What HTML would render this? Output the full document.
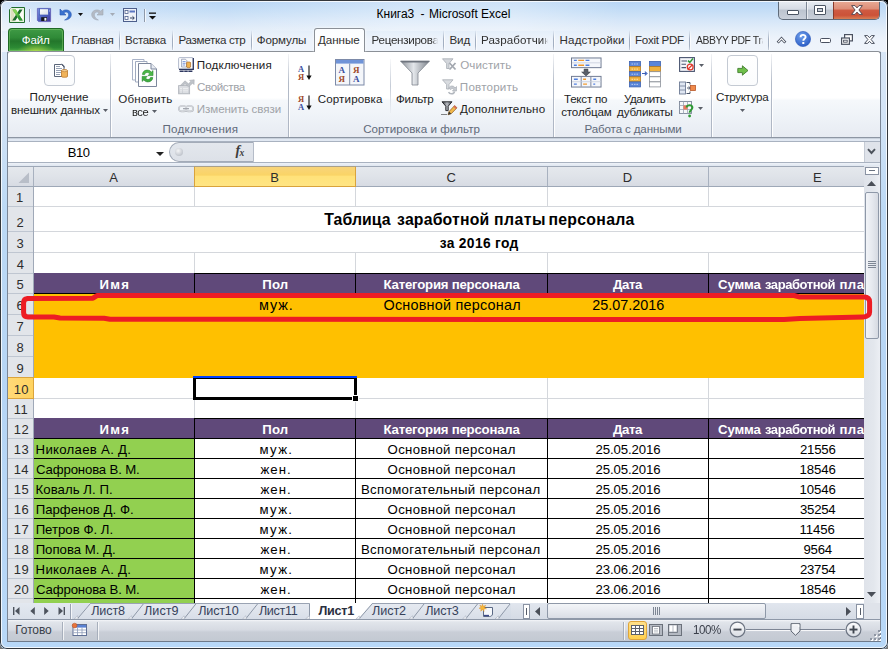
<!DOCTYPE html>
<html><head><meta charset="utf-8"><title>Excel</title>
<style>
*{box-sizing:border-box;margin:0;padding:0}
html,body{width:888px;height:649px;overflow:hidden;background:linear-gradient(#000 0,#000 50%,#757575 50%,#757575 100%)}
body{font-family:"Liberation Sans",sans-serif;font-size:12px;color:#1e1e1e;position:relative}
.a{position:absolute}
.t{position:absolute;white-space:nowrap}
#win{position:absolute;left:0;top:0;width:888px;height:649px;border-radius:7px 7px 6px 6px;overflow:hidden;
 background:linear-gradient(180deg,#dbe8f7 0px,#d4e4f6 110px,#bcd9f5 210px,#b6d5f5 400px,#b8d8f8 649px)}
svg{position:absolute;overflow:visible}

</style></head><body>
<div id="win">
<div class="a" style="left:1px;top:1px;width:886px;height:51px;background:linear-gradient(180deg,#b7d5f5 0px,#c2dcf6 8px,#d3e5f8 18px,#e2edf9 28px,#edf3fb 38px,#eff4fb 51px);"></div>
<div class="a" style="left:1px;top:1px;width:886px;height:30px;background:linear-gradient(90deg,rgba(255,255,255,.35) 0%,rgba(255,255,255,.15) 12%,rgba(255,255,255,0) 25%,rgba(255,255,255,.3) 45%,rgba(255,255,255,.3) 58%,rgba(255,255,255,0) 70%,rgba(255,255,255,0) 100%);"></div>
<div class="t" style="left:376.62px;top:6.00px;font-size:12px;line-height:16px;letter-spacing:-0.027px;color:#000;">Книга3</div>
<div class="t" style="left:420.47px;top:6.00px;font-size:12px;line-height:16px;letter-spacing:0.000px;color:#000;">-</div>
<div class="t" style="left:429.02px;top:6.00px;font-size:12px;line-height:16px;letter-spacing:0.003px;color:#000;">Microsoft Excel</div>
<svg style="left:9px;top:7px" width="16" height="16" viewBox="0 0 16 16">
<path d="M2.6 0.5 H15.5 V15.5 H0.5 V2.6 Z" fill="#fbfcf7" stroke="#1f6e2c"/>
<path d="M1.2 3 L3 1.2 H5.5 V14.8 H1.2 Z" fill="#dddfc0"/>
<path d="M1.5 1.5 H14.5 V14.5 H1.5 Z" fill="none" stroke="#e4efd8" stroke-width=".8"/>
<path d="M10.4 2.6 H13.6 L6.4 13.4 H3.2 Z" fill="#1c6a2c"/>
<path d="M3.4 2.6 H6.8 L13.8 13.4 H10.4 Z" fill="#4fb33e"/>
<path d="M3.4 2.6 H6.8 L8.6 5.4 L6.9 8 Z" fill="#86d257"/>
<path d="M8.6 10.6 L10.4 13.4 H13.8 L10.2 7.9 Z" fill="#2f9436"/>
</svg>
<div class="a" style="left:29px;top:9px;width:1px;height:13px;background:#8e9aab"></div>
<div class="a" style="left:30px;top:9px;width:1px;height:13px;background:rgba(255,255,255,.7)"></div>
<svg style="left:37px;top:8px" width="14" height="14" viewBox="0 0 14 14">
<defs><linearGradient id="sv" x1="0" y1="0" x2="1" y2="1"><stop offset="0" stop-color="#7b95e0"/><stop offset=".5" stop-color="#4f62c0"/><stop offset="1" stop-color="#46389c"/></linearGradient>
<linearGradient id="sl" x1="0" y1="0" x2="1" y2="1"><stop offset="0" stop-color="#ffffff"/><stop offset="1" stop-color="#d9dde6"/></linearGradient></defs>
<path d="M0.4 0.4 H13.6 V13.6 H1.6 L0.4 12.4 Z" fill="url(#sv)" stroke="#5a55b0" stroke-width=".7"/>
<rect x="2.6" y="0.8" width="8.8" height="6.2" fill="url(#sl)" stroke="#3f56b8" stroke-width=".7"/>
<rect x="4.2" y="9.2" width="5.8" height="3.8" fill="#15161c"/>
<rect x="7.4" y="9.9" width="2" height="2.8" fill="#f2f3f6"/>
<rect x="12" y="1.6" width="0.9" height="2.2" fill="#8fa0e0"/>
</svg>
<svg style="left:59px;top:8px" width="13" height="13" viewBox="0 0 13 13">
<path d="M1 1 L1 7 L7 7 L4.8 4.9 C7 3.2 10 4.2 9.6 7.4 C9.3 9.6 7.6 11 5.6 12 C9.5 12 12.3 9.8 12.3 6.6 C12.3 2 6.5 0.6 3.2 3.2 Z" fill="#3a72d0" stroke="#2856b0" stroke-width=".6"/>
</svg>
<svg style="left:78px;top:13px" width="5" height="3" viewBox="0 0 5 3"><path d="M0 0H5L2.5 3Z" fill="#111"/></svg>
<svg style="left:91px;top:8px" width="13" height="13" viewBox="0 0 13 13">
<path transform="translate(13,0) scale(-1,1)" d="M1 1 L1 7 L7 7 L4.8 4.9 C7 3.2 10 4.2 9.6 7.4 C9.3 9.6 7.6 11 5.6 12 C9.5 12 12.3 9.8 12.3 6.6 C12.3 2 6.5 0.6 3.2 3.2 Z" fill="#b4bac4" stroke="#a0a7b3" stroke-width=".6"/>
</svg>
<svg style="left:110px;top:13px" width="5" height="3" viewBox="0 0 5 3"><path d="M0 0H5L2.5 3Z" fill="#a4abb6"/></svg>
<svg style="left:123px;top:8px" width="14" height="14" viewBox="0 0 14 14">
<rect x="0.5" y="0.5" width="13" height="13" fill="#eef2f8" stroke="#4d5f8c"/>
<rect x="2" y="2.5" width="3" height="3" fill="#fff" stroke="#4d5f8c" stroke-width=".8"/>
<rect x="2" y="8.5" width="3" height="3" fill="#fff" stroke="#4d5f8c" stroke-width=".8"/>
<rect x="6.5" y="2.5" width="5.5" height="2" fill="#5c77c2"/>
<path d="M7 10 H11 M9.5 8.3 L11.3 10 L9.5 11.7" stroke="#33415f" stroke-width="1" fill="none"/>
</svg>
<div class="a" style="left:144px;top:9px;width:1px;height:13px;background:#8e9aab"></div>
<div class="a" style="left:145px;top:9px;width:1px;height:13px;background:rgba(255,255,255,.7)"></div>
<svg style="left:149px;top:12px" width="7" height="8" viewBox="0 0 7 8"><rect x="0" y="0.5" width="7" height="1.3" fill="#111"/><path d="M0 4H7L3.5 7.6Z" fill="#111"/></svg>
<div class="a" style="left:778px;top:1px;width:102px;height:19px;border:1px solid #5f6b7a;border-top:none;border-radius:0 0 5px 5px;background:linear-gradient(180deg,#e8edf3 0%,#d5dbe4 45%,#bcc4cf 50%,#c9d0da 100%);overflow:hidden;"><div class="a" style="left:54px;top:0;width:48px;height:19px;background:linear-gradient(180deg,#e9ab96 0%,#de8f79 40%,#cf5a41 50%,#cc5238 75%,#dc8a5c 100%);border-left:1px solid #8a3a2a"></div><div class="a" style="left:27px;top:0;width:1px;height:19px;background:#7d8795"></div><div class="a" style="left:28px;top:0;width:1px;height:19px;background:rgba(255,255,255,.6)"></div></div>
<div class="a" style="left:787px;top:10px;width:12px;height:5px;background:#fff;border:1px solid #4b5563;border-radius:1px"></div>
<div class="a" style="left:814px;top:5px;width:12px;height:10px;background:#fff;border:1px solid #4b5563;border-radius:1px"><div class="a" style="left:2px;top:2px;width:6px;height:4px;border:1px solid #4b5563;background:#c9cfd8"></div></div>
<svg style="left:851px;top:5px" width="12" height="10" viewBox="0 0 12 10">
<path d="M0.6 0.6 L4 0.6 L6 2.9 L8 0.6 L11.4 0.6 L7.9 5 L11.4 9.4 L8 9.4 L6 7.1 L4 9.4 L0.6 9.4 L4.1 5 Z" fill="#fff" stroke="#5b4a52" stroke-width="1"/>
</svg>
<div class="a" style="left:8px;top:28px;width:56px;height:23px;border-radius:4px 4px 0 0;border:1px solid #1f6a25;border-bottom:none;background:linear-gradient(180deg,#3f9a45 0%,#2f8a37 40%,#23762b 55%,#2c8a34 85%,#4aa844 100%);box-shadow:inset 0 0 0 1px rgba(140,210,120,.45)"><div class="a" style="left:8px;top:14px;width:38px;height:8px;background:radial-gradient(ellipse at 50% 100%,rgba(190,225,70,.75),rgba(120,200,60,0) 70%)"></div></div>
<div class="t" style="left:21.83px;top:32.30px;font-size:11.6px;line-height:16px;letter-spacing:-0.182px;color:#fff;">Файл</div>
<div class="t" style="left:71.55px;top:32.30px;font-size:11.6px;line-height:16px;letter-spacing:-0.308px;color:#303030;">Главная</div>
<div class="t" style="left:125.05px;top:32.30px;font-size:11.6px;line-height:16px;letter-spacing:-0.340px;color:#303030;">Вставка</div>
<div class="t" style="left:178.55px;top:32.30px;font-size:11.6px;line-height:16px;letter-spacing:-0.329px;color:#303030;">Разметка стр</div>
<div class="t" style="left:256.83px;top:32.30px;font-size:11.6px;line-height:16px;letter-spacing:-0.155px;color:#303030;">Формулы</div>
<div class="a" style="left:314px;top:28px;width:51px;height:24px;border:1px solid #8b9097;border-bottom:none;border-radius:3px 3px 0 0;background:linear-gradient(180deg,#fbfdff,#ffffff);z-index:3;box-shadow:0 0 3px rgba(255,255,255,.9)"></div>
<div class="t" style="left:317.92px;top:32.30px;font-size:11.6px;line-height:16px;letter-spacing:-0.022px;color:#303030;z-index:4;">Данные</div>
<div class="t" style="left:371.55px;top:32.30px;font-size:11.6px;line-height:16px;letter-spacing:-0.275px;color:#303030;width:66.95px;overflow:hidden;-webkit-mask-image:linear-gradient(90deg,#000 90%,transparent 100%);">Рецензирова</div>
<div class="t" style="left:449.55px;top:32.30px;font-size:11.6px;line-height:16px;letter-spacing:-0.168px;color:#303030;">Вид</div>
<div class="t" style="left:481.05px;top:32.30px;font-size:11.6px;line-height:16px;letter-spacing:0.078px;color:#303030;width:67.45px;overflow:hidden;-webkit-mask-image:linear-gradient(90deg,#000 92%,transparent 100%);">Разработчик</div>
<div class="t" style="left:559.55px;top:32.30px;font-size:11.6px;line-height:16px;letter-spacing:0.145px;color:#303030;">Надстройки</div>
<div class="t" style="left:635.05px;top:32.30px;font-size:11.6px;line-height:16px;letter-spacing:-0.305px;color:#303030;">Foxit PDF</div>
<div class="t" style="left:695.98px;top:32.30px;font-size:11.6px;line-height:16px;letter-spacing:-0.450px;color:#303030;transform:scaleX(0.8965);transform-origin:0 0;width:75.31px;overflow:hidden;-webkit-mask-image:linear-gradient(90deg,#000 93%,transparent 100%);">ABBYY PDF Tra</div>
<div class="a" style="left:119px;top:30px;width:1px;height:20px;background:linear-gradient(180deg,rgba(150,162,180,0),#a3afc1 45%,#a3afc1 80%,rgba(150,162,180,.4))"></div>
<div class="a" style="left:120px;top:30px;width:1px;height:20px;background:linear-gradient(180deg,rgba(255,255,255,0),rgba(255,255,255,.9) 45%,rgba(255,255,255,.5))"></div>
<div class="a" style="left:172px;top:30px;width:1px;height:20px;background:linear-gradient(180deg,rgba(150,162,180,0),#a3afc1 45%,#a3afc1 80%,rgba(150,162,180,.4))"></div>
<div class="a" style="left:173px;top:30px;width:1px;height:20px;background:linear-gradient(180deg,rgba(255,255,255,0),rgba(255,255,255,.9) 45%,rgba(255,255,255,.5))"></div>
<div class="a" style="left:251px;top:30px;width:1px;height:20px;background:linear-gradient(180deg,rgba(150,162,180,0),#a3afc1 45%,#a3afc1 80%,rgba(150,162,180,.4))"></div>
<div class="a" style="left:252px;top:30px;width:1px;height:20px;background:linear-gradient(180deg,rgba(255,255,255,0),rgba(255,255,255,.9) 45%,rgba(255,255,255,.5))"></div>
<div class="a" style="left:443px;top:30px;width:1px;height:20px;background:linear-gradient(180deg,rgba(150,162,180,0),#a3afc1 45%,#a3afc1 80%,rgba(150,162,180,.4))"></div>
<div class="a" style="left:444px;top:30px;width:1px;height:20px;background:linear-gradient(180deg,rgba(255,255,255,0),rgba(255,255,255,.9) 45%,rgba(255,255,255,.5))"></div>
<div class="a" style="left:475px;top:30px;width:1px;height:20px;background:linear-gradient(180deg,rgba(150,162,180,0),#a3afc1 45%,#a3afc1 80%,rgba(150,162,180,.4))"></div>
<div class="a" style="left:476px;top:30px;width:1px;height:20px;background:linear-gradient(180deg,rgba(255,255,255,0),rgba(255,255,255,.9) 45%,rgba(255,255,255,.5))"></div>
<div class="a" style="left:553px;top:30px;width:1px;height:20px;background:linear-gradient(180deg,rgba(150,162,180,0),#a3afc1 45%,#a3afc1 80%,rgba(150,162,180,.4))"></div>
<div class="a" style="left:554px;top:30px;width:1px;height:20px;background:linear-gradient(180deg,rgba(255,255,255,0),rgba(255,255,255,.9) 45%,rgba(255,255,255,.5))"></div>
<div class="a" style="left:629px;top:30px;width:1px;height:20px;background:linear-gradient(180deg,rgba(150,162,180,0),#a3afc1 45%,#a3afc1 80%,rgba(150,162,180,.4))"></div>
<div class="a" style="left:630px;top:30px;width:1px;height:20px;background:linear-gradient(180deg,rgba(255,255,255,0),rgba(255,255,255,.9) 45%,rgba(255,255,255,.5))"></div>
<div class="a" style="left:689px;top:30px;width:1px;height:20px;background:linear-gradient(180deg,rgba(150,162,180,0),#a3afc1 45%,#a3afc1 80%,rgba(150,162,180,.4))"></div>
<div class="a" style="left:690px;top:30px;width:1px;height:20px;background:linear-gradient(180deg,rgba(255,255,255,0),rgba(255,255,255,.9) 45%,rgba(255,255,255,.5))"></div>
<div class="a" style="left:768px;top:30px;width:1px;height:20px;background:linear-gradient(180deg,rgba(150,162,180,0),#a3afc1 45%,#a3afc1 80%,rgba(150,162,180,.4))"></div>
<div class="a" style="left:769px;top:30px;width:1px;height:20px;background:linear-gradient(180deg,rgba(255,255,255,0),rgba(255,255,255,.9) 45%,rgba(255,255,255,.5))"></div>
<svg style="left:777px;top:36px" width="9" height="7" viewBox="0 0 9 7"><path d="M1.6 5.6 L4.5 2.5 L7.4 5.6" fill="none" stroke="#4a5160" stroke-width="2.8" stroke-linejoin="miter" stroke-linecap="square"/><path d="M1.6 5.6 L4.5 2.5 L7.4 5.6" fill="none" stroke="#fff" stroke-width="1.1" stroke-linecap="square"/></svg>
<svg style="left:795px;top:31px" width="16" height="16" viewBox="0 0 16 16">
<defs><radialGradient id="hg" cx=".4" cy=".3" r=".8"><stop offset="0" stop-color="#6fa0ec"/><stop offset="1" stop-color="#2456c2"/></radialGradient></defs>
<circle cx="8" cy="8" r="7.6" fill="url(#hg)" stroke="#2b59b8" stroke-width=".6"/>
<path d="M5.6 6.2 C5.6 3.2 10.6 3.2 10.6 6 C10.6 7.8 8.3 7.8 8.3 9.8" fill="none" stroke="#fff" stroke-width="1.9"/>
<rect x="7.3" y="11" width="2" height="2" fill="#fff"/></svg>
<div class="a" style="left:820px;top:38px;width:11px;height:5px;background:#fff;border:1px solid #4a5160;border-radius:1.5px"></div>
<svg style="left:841px;top:34px" width="12" height="11" viewBox="0 0 12 11">
<rect x="3.6" y="0.6" width="7.8" height="6.3" fill="#fff" stroke="#4a5160" stroke-width="1.2"/>
<rect x="0.6" y="4" width="7.8" height="6.3" fill="#fff" stroke="#4a5160" stroke-width="1.2"/>
<rect x="2.6" y="6.2" width="3.6" height="2" fill="#fff" stroke="#4a5160" stroke-width=".9"/></svg>
<svg style="left:864px;top:35px" width="11" height="9" viewBox="0 0 11 9">
<path d="M0.6 0.6 L3.6 0.6 L5.5 2.7 L7.4 0.6 L10.4 0.6 L7.1 4.5 L10.4 8.4 L7.4 8.4 L5.5 6.3 L3.6 8.4 L0.6 8.4 L3.9 4.5 Z" fill="#fff" stroke="#4a5160" stroke-width="1"/></svg>
<div class="a" style="left:7px;top:51px;width:874px;height:87px;border:1px solid #8b9097;border-bottom:1px solid #8d96a3;border-radius:3px 3px 0 0;background:linear-gradient(180deg,#ffffff 0%,#ffffff 54%,#f5f8fb 57%,#eff3f8 75%,#e7ebf2 100%);"></div>
<div class="a" style="left:8px;top:138px;width:872px;height:1px;background:#c9d1dc"></div>
<div class="a" style="left:8px;top:139px;width:872px;height:27px;background:#e1e8f2"></div>
<div class="a" style="left:110px;top:54px;width:1px;height:83px;background:linear-gradient(180deg,rgba(176,184,198,.15),#b3bbc8 35%,#aeb6c4 100%)"></div>
<div class="a" style="left:111px;top:54px;width:1px;height:83px;background:linear-gradient(180deg,rgba(255,255,255,.2),rgba(255,255,255,.95) 35%)"></div>
<div class="a" style="left:288px;top:54px;width:1px;height:83px;background:linear-gradient(180deg,rgba(176,184,198,.15),#b3bbc8 35%,#aeb6c4 100%)"></div>
<div class="a" style="left:289px;top:54px;width:1px;height:83px;background:linear-gradient(180deg,rgba(255,255,255,.2),rgba(255,255,255,.95) 35%)"></div>
<div class="a" style="left:553px;top:54px;width:1px;height:83px;background:linear-gradient(180deg,rgba(176,184,198,.15),#b3bbc8 35%,#aeb6c4 100%)"></div>
<div class="a" style="left:554px;top:54px;width:1px;height:83px;background:linear-gradient(180deg,rgba(255,255,255,.2),rgba(255,255,255,.95) 35%)"></div>
<div class="a" style="left:711px;top:54px;width:1px;height:83px;background:linear-gradient(180deg,rgba(176,184,198,.15),#b3bbc8 35%,#aeb6c4 100%)"></div>
<div class="a" style="left:712px;top:54px;width:1px;height:83px;background:linear-gradient(180deg,rgba(255,255,255,.2),rgba(255,255,255,.95) 35%)"></div>
<div class="a" style="left:771px;top:54px;width:1px;height:83px;background:linear-gradient(180deg,rgba(176,184,198,.15),#b3bbc8 35%,#aeb6c4 100%)"></div>
<div class="a" style="left:772px;top:54px;width:1px;height:83px;background:linear-gradient(180deg,rgba(255,255,255,.2),rgba(255,255,255,.95) 35%)"></div>
<div class="a" style="left:44px;top:55px;width:31px;height:31px;border:1px solid #c4cad3;border-radius:4px;background:linear-gradient(#ffffff,#fbfcfd)"></div>
<svg style="left:53px;top:63px" width="16" height="16" viewBox="0 0 16 16">
<path d="M1.5 1.5 H8.5 L11 4 V13.5 H1.5 Z" fill="#fff" stroke="#5a6578" stroke-width="1"/>
<path d="M3 5.5H9 M3 7.5H9 M3 9.5H8 M3 11.5H7 M3 3.5H7" stroke="#8b97ad" stroke-width=".9"/>
<path d="M8.5 1.2 C10.5 1.6 11.2 3 11.4 4.4" stroke="#3d4760" stroke-width="1" fill="none"/>
<path d="M8.5 7.6 C8.5 6.5 14.5 6.5 14.5 7.6 V13.4 C14.5 14.6 8.5 14.6 8.5 13.4 Z" fill="#f0b35a" stroke="#b9762a" stroke-width=".8"/>
<ellipse cx="11.5" cy="7.7" rx="3" ry="1" fill="#f9d9a0" stroke="#b9762a" stroke-width=".6"/>
</svg>
<div class="t" style="left:29.56px;top:88.80px;font-size:11.6px;line-height:16px;letter-spacing:0.008px;color:#1e1e1e;">Получение</div>
<div class="t" style="left:10.90px;top:101.80px;font-size:11.6px;line-height:16px;letter-spacing:-0.090px;color:#1e1e1e;">внешних данных</div>
<svg style="left:103px;top:108.5px" width="5" height="3" viewBox="0 0 5 3"><path d="M0 0H5L2.5 3Z" fill="#5a5f68"/></svg>
<svg style="left:131px;top:58px" width="27" height="30" viewBox="0 0 27 30">
<path d="M1.5 1.5 H13 V22 H1.5 Z" fill="#fff" stroke="#a9b3c8"/>
<path d="M4.5 3.5 H16 V24 H4.5 Z" fill="#fff" stroke="#a0aabf"/>
<path d="M7.5 5.5 H20 L25.5 11 V28.5 H7.5 Z" fill="#fdfdfe" stroke="#7d879c"/>
<path d="M20 5.5 V11 H25.5" fill="#e7ebf2" stroke="#7d879c"/>
<path d="M11.5 16.5 C11.5 11.5 18.5 10.8 20.3 14.2 L22 12.6 V17.6 H17 L18.7 15.9 C17.4 13.7 13.8 14.3 13.7 16.5 Z" fill="#4cb848" stroke="#2a8a2e" stroke-width=".6"/>
<path d="M21.7 19.5 C21.7 24.5 14.7 25.2 12.9 21.8 L11.2 23.4 V18.4 H16.2 L14.5 20.1 C15.8 22.3 19.4 21.7 19.5 19.5 Z" fill="#3fae3f" stroke="#1f7d27" stroke-width=".6"/>
</svg>
<div class="t" style="left:118.25px;top:91.00px;font-size:11.6px;line-height:16px;letter-spacing:0.215px;color:#1e1e1e;">Обновить</div>
<div class="t" style="left:131.93px;top:103.80px;font-size:11.6px;line-height:16px;letter-spacing:-0.450px;color:#1e1e1e;transform:scaleX(0.9633);transform-origin:0 0;">все</div>
<svg style="left:152px;top:110px" width="5" height="3" viewBox="0 0 5 3"><path d="M0 0H5L2.5 3Z" fill="#5a5f68"/></svg>
<svg style="left:178px;top:57px" width="16" height="16" viewBox="0 0 16 16">
<rect x="0.6" y="0.6" width="14.6" height="11.6" rx="1" fill="#fdfdfe" stroke="#aab2c6" stroke-width=".9"/>
<path d="M15.3 1 V12.4 H1" fill="none" stroke="#2e3860" stroke-width="1.3"/>
<path d="M3.6 2.2 H7.4 L8.8 3.6 V10 H3.6 Z" fill="#fff" stroke="#7f8aa6" stroke-width=".7"/>
<path d="M4.6 4.6H7.6 M4.6 6.3H7.6 M4.6 8H7.2" stroke="#5b7fd0" stroke-width=".8"/>
<path d="M8.6 5.6 C8.6 4.8 12.6 4.8 12.6 5.6 V10 C12.6 10.9 8.6 10.9 8.6 10 Z" fill="#f0b24e" stroke="#a8682a" stroke-width=".7"/>
<path d="M1.6 14.2 H14.4" stroke="#2e3860" stroke-width="1.5"/><path d="M5.2 14 H6.6 M9.4 14 H10.8" stroke="#dfe3ee" stroke-width=".9"/>
</svg>
<div class="t" style="left:196.76px;top:56.70px;font-size:11.6px;line-height:16px;letter-spacing:0.158px;color:#1e1e1e;">Подключения</div>
<svg style="left:178px;top:79px" width="17" height="16" viewBox="0 0 17 16">
<defs><linearGradient id="pg" x1="0" y1="0" x2="0" y2="1"><stop offset="0" stop-color="#dfe1e5"/><stop offset="1" stop-color="#c9ccd2"/></linearGradient></defs>
<rect x="0.6" y="6.6" width="11" height="8.2" fill="url(#pg)" stroke="#b3b7be" stroke-width=".9"/>
<path d="M2 9.4H4 M5 9.4H10 M2 11.2H4 M5 11.2H10 M2 13H4 M5 13H10" stroke="#f1f2f4" stroke-width=".9"/>
<path d="M2.4 6.4 L7 1.8 L10.4 4.8 L13 2.6 L11.6 1.4 L16.2 0.8 L16 5.6 L14.6 4.2 L10.6 7.8 L7 4.8 L5 6.6 Z" fill="#bfc3c9" stroke="#a9adb4" stroke-width=".6"/>
</svg>
<div class="t" style="left:197.11px;top:78.80px;font-size:11.6px;line-height:16px;letter-spacing:-0.401px;color:#a0a3a8;">Свойства</div>
<svg style="left:178px;top:105px" width="16" height="8" viewBox="0 0 16 8">
<rect x="0.8" y="1" width="7.6" height="5.4" rx="2.7" fill="none" stroke="#b4b8bf" stroke-width="1.7"/>
<rect x="7.6" y="1" width="7.6" height="5.4" rx="2.7" fill="none" stroke="#b4b8bf" stroke-width="1.7"/>
<rect x="0.8" y="1" width="7.6" height="5.4" rx="2.7" fill="none" stroke="#eceef1" stroke-width=".6"/>
<rect x="7.6" y="1" width="7.6" height="5.4" rx="2.7" fill="none" stroke="#eceef1" stroke-width=".6"/>
<path d="M5 3.7 H11" stroke="#a4a8b0" stroke-width="1.3"/>
</svg>
<div class="t" style="left:196.75px;top:101.00px;font-size:11.6px;line-height:16px;letter-spacing:-0.080px;color:#a0a3a8;">Изменить связи</div>
<div class="t" style="left:162.56px;top:120.50px;font-size:11.6px;line-height:16px;letter-spacing:0.218px;color:#616a7a;">Подключения</div>
<svg style="left:298px;top:65.3px" width="15" height="16" viewBox="0 0 15 16">
<text x="0" y="7.3" font-family="Liberation Serif" font-weight="bold" font-size="8.5" fill="#3a4fa0">А</text>
<text x="0" y="15.3" font-family="Liberation Serif" font-weight="bold" font-size="8.5" fill="#a04a2a">Я</text>
<path d="M11 0.5 V13" stroke="#111" stroke-width="1.1"/><path d="M8.4 10.4 L11 15 L13.6 10.4 Z" fill="#111"/></svg>
<svg style="left:298px;top:95px" width="15" height="16" viewBox="0 0 15 16">
<text x="0" y="7.3" font-family="Liberation Serif" font-weight="bold" font-size="8.5" fill="#a04a2a">Я</text>
<text x="0" y="15.3" font-family="Liberation Serif" font-weight="bold" font-size="8.5" fill="#3a4fa0">А</text>
<path d="M11 0.5 V13" stroke="#111" stroke-width="1.1"/><path d="M8.4 10.4 L11 15 L13.6 10.4 Z" fill="#111"/></svg>
<svg style="left:335px;top:59px" width="30" height="27" viewBox="0 0 30 27">
<rect x="0.5" y="0.5" width="28.5" height="25.5" fill="#f4f6fa" stroke="#7c8aa8"/>
<rect x="1" y="1" width="27.5" height="3.6" fill="#6f93d8"/>
<path d="M14.7 4.6 V26" stroke="#7c8aa8"/>
<text x="3.6" y="13.6" font-family="Liberation Serif" font-weight="bold" font-size="9" fill="#3a4fa0">А</text>
<text x="3.6" y="23.4" font-family="Liberation Serif" font-weight="bold" font-size="9" fill="#a04a2a">Я</text>
<text x="18" y="13.6" font-family="Liberation Serif" font-weight="bold" font-size="9" fill="#a04a2a">Я</text>
<text x="18" y="23.4" font-family="Liberation Serif" font-weight="bold" font-size="9" fill="#3a4fa0">А</text>
</svg>
<div class="t" style="left:317.71px;top:91.00px;font-size:11.6px;line-height:16px;letter-spacing:0.125px;color:#1e1e1e;">Сортировка</div>
<div class="a" style="left:390px;top:59px;width:1px;height:54px;background:linear-gradient(180deg,rgba(190,197,208,.1),#c5ccd7 50%,rgba(190,197,208,.1))"></div>
<svg style="left:400px;top:60px" width="30" height="26" viewBox="0 0 30 26">
<defs><linearGradient id="fg" x1="0" x2="1"><stop offset="0" stop-color="#8d9299"/><stop offset=".45" stop-color="#e3e6ea"/><stop offset="1" stop-color="#7d838b"/></linearGradient></defs>
<path d="M0.5 1 H29.5 L18 13 V25 H12 V13 Z" fill="url(#fg)" stroke="#80868f" stroke-width=".8"/>
<path d="M0.5 1 H29.5 L28 2.6 H2 Z" fill="#6f757e"/>
</svg>
<div class="t" style="left:396.03px;top:91.00px;font-size:11.6px;line-height:16px;letter-spacing:-0.244px;color:#1e1e1e;">Фильтр</div>
<svg style="left:442px;top:58px" width="15" height="14" viewBox="0 0 15 14">
<path d="M0.5 0.8 H11 L7 5.5 V10.5 H4.6 V5.5 Z" fill="#d4d7dc" stroke="#a6abb3" stroke-width=".8"/>
<path d="M7.5 5 L13.5 11.5 M13.5 5 L7.5 11.5" stroke="#a3a8b0" stroke-width="1.8"/></svg>
<div class="t" style="left:460.25px;top:56.70px;font-size:11.6px;line-height:16px;letter-spacing:0.076px;color:#a0a3a8;">Очистить</div>
<svg style="left:442px;top:79px" width="15" height="16" viewBox="0 0 15 16">
<path d="M0.5 0.8 H11 L7 5.5 V10 H4.6 V5.5 Z" fill="#d9dce0" stroke="#a6abb3" stroke-width=".8"/>
<path d="M7 9.5 C7 6.5 12 6 13 9 L14.5 7.5 V12 H10.4 L11.8 10.4 C11 9 8.8 9.3 8.8 10.6 Z" fill="#c5c9cf" stroke="#a3a8b0" stroke-width=".6"/>
<path d="M12.5 12.5 C12 15.4 7.6 15.6 6.6 13 " fill="none" stroke="#b3b8bf" stroke-width="1.5"/></svg>
<div class="t" style="left:459.86px;top:78.80px;font-size:11.6px;line-height:16px;letter-spacing:0.202px;color:#a0a3a8;">Повторить</div>
<svg style="left:441px;top:101px" width="17" height="15" viewBox="0 0 17 15">
<defs><linearGradient id="af" x1="0" x2="1"><stop offset="0" stop-color="#2a2d33"/><stop offset=".5" stop-color="#b9bdc4"/><stop offset="1" stop-color="#3a3d44"/></linearGradient></defs>
<path d="M1 0.8 H11 L7.2 5.2 V9.6 H4.8 V5.2 Z" fill="url(#af)" stroke="#1c1e22" stroke-width=".9"/>
<path d="M0.5 13.5 H6" stroke="#111" stroke-width="1.2" stroke-dasharray="1 1"/>
<path d="M7 13.8 L8 10.6 L13.6 4.6 L16 6.8 L10.2 12.8 Z" fill="#f2b84b" stroke="#8a5a1e" stroke-width=".7"/>
<path d="M13.6 4.6 L16 6.8 L14.8 8 L12.5 5.8 Z" fill="#d86a5a"/>
<path d="M7 13.8 L8 10.6 L10.2 12.8 Z" fill="#333"/></svg>
<div class="t" style="left:459.92px;top:101.00px;font-size:11.6px;line-height:16px;letter-spacing:0.145px;color:#1e1e1e;">Дополнительно</div>
<div class="t" style="left:363.21px;top:120.50px;font-size:11.6px;line-height:16px;letter-spacing:0.033px;color:#616a7a;">Сортировка и фильтр</div>
<svg style="left:571px;top:57px" width="31" height="31" viewBox="0 0 32 31">
<rect x="0.5" y="0.5" width="30.5" height="10" fill="#f5f7fb" stroke="#6d7890"/>
<path d="M1 5.5H31" stroke="#c6cddb" stroke-width=".8"/>
<path d="M3 3H6 M15 3H19 M3 8H6 M15 8H19" stroke="#4f7fe0" stroke-width="1.4"/>
<path d="M7.5 3H13.5 M7.5 8H13.5" stroke="#f29a2e" stroke-width="1.4"/>
<path d="M13.5 12 H17.5 V15 H20 L15.5 19 L11 15 H13.5 Z" fill="#5a5f68" stroke="#3e434b" stroke-width=".6"/>
<rect x="0.5" y="19.5" width="30.5" height="11" fill="#f5f7fb" stroke="#6d7890"/>
<path d="M10.5 20V30 M20.5 20V30" stroke="#6d7890" stroke-width=".9"/><path d="M1 25H31" stroke="#c6cddb" stroke-width=".8"/>
<path d="M3 22.5H7 M3 27.5H6 M23 22.5H26 M23 27.5H25" stroke="#4f7fe0" stroke-width="1.4"/>
<path d="M12.5 22.5H15.5 M12.5 27.5H16.5" stroke="#f29a2e" stroke-width="1.4"/>
</svg>
<div class="t" style="left:563.94px;top:91.00px;font-size:11.6px;line-height:16px;letter-spacing:-0.233px;color:#1e1e1e;">Текст по</div>
<div class="t" style="left:561.21px;top:103.50px;font-size:11.6px;line-height:16px;letter-spacing:-0.165px;color:#1e1e1e;">столбцам</div>
<svg style="left:629px;top:61px" width="32" height="27" viewBox="0 0 32 27"><rect x="0.5" y="0.5" width="11" height="5" fill="#5b86d8" stroke="#3c62b0" stroke-width=".8"/><path d="M2.5 3 h7" stroke="#b9ccf0" stroke-width="1" stroke-dasharray="1.5 1"/><rect x="0.5" y="5.6" width="11" height="5" fill="#f0b13c" stroke="#b57a1e" stroke-width=".8"/><path d="M2.5 8.1 h7" stroke="#fbe3a8" stroke-width="1" stroke-dasharray="1.5 1"/><rect x="0.5" y="10.7" width="11" height="5" fill="#5b86d8" stroke="#3c62b0" stroke-width=".8"/><path d="M2.5 13.2 h7" stroke="#b9ccf0" stroke-width="1" stroke-dasharray="1.5 1"/><rect x="0.5" y="15.8" width="11" height="5" fill="#f0b13c" stroke="#b57a1e" stroke-width=".8"/><path d="M2.5 18.3 h7" stroke="#fbe3a8" stroke-width="1" stroke-dasharray="1.5 1"/><rect x="0.5" y="20.9" width="11" height="5" fill="#5b86d8" stroke="#3c62b0" stroke-width=".8"/><path d="M2.5 23.4 h7" stroke="#b9ccf0" stroke-width="1" stroke-dasharray="1.5 1"/><rect x="20.5" y="0.5" width="11" height="5" fill="#5b86d8" stroke="#3c62b0" stroke-width=".8"/><rect x="20.5" y="5.6" width="11" height="5" fill="#f0b13c" stroke="#b57a1e" stroke-width=".8"/><rect x="20.5" y="10.7" width="11" height="5" fill="#fff" stroke="#8a8f98" stroke-width=".8"/><rect x="20.5" y="15.8" width="11" height="5" fill="#fff" stroke="#8a8f98" stroke-width=".8"/><rect x="20.5" y="20.9" width="11" height="5" fill="#fff" stroke="#8a8f98" stroke-width=".8"/><path d="M13 12.5 H17 M15.8 10.6 L18 12.5 L15.8 14.4" stroke="#3a5fb8" stroke-width="1.1" fill="none"/></svg>
<div class="t" style="left:623.89px;top:91.00px;font-size:11.6px;line-height:16px;letter-spacing:-0.384px;color:#1e1e1e;">Удалить</div>
<div class="t" style="left:617.09px;top:103.50px;font-size:11.6px;line-height:16px;letter-spacing:-0.177px;color:#1e1e1e;">дубликаты</div>
<svg style="left:679px;top:57px" width="16" height="15" viewBox="0 0 16 15">
<rect x="0.6" y="0.6" width="14.8" height="13.8" fill="#f4f6fa" stroke="#4a5570" stroke-width="1.1"/>
<path d="M2.5 4H8 M2.5 7.3H7 M2.5 10.6H7" stroke="#4a5570" stroke-width="1.1"/>
<path d="M9 3.6 L10.8 5.4 L14 1.6" stroke="#2e9a34" stroke-width="1.5" fill="none"/>
<circle cx="11.2" cy="10" r="2.9" fill="#fff" stroke="#e03a2e" stroke-width="1.3"/><path d="M9.2 12 L13.2 8" stroke="#e03a2e" stroke-width="1.2"/></svg>
<svg style="left:699px;top:64px" width="5" height="3" viewBox="0 0 5 3"><path d="M0 0H5L2.5 3Z" fill="#5a5f68"/></svg>
<svg style="left:679px;top:81px" width="17" height="14" viewBox="0 0 17 14">
<rect x="0.5" y="1" width="6" height="12" fill="#dfe6f2" stroke="#6f7c96" stroke-width=".9"/><path d="M0.5 5H6.5 M0.5 9H6.5" stroke="#6f7c96" stroke-width=".8"/>
<path d="M7.5 1.5 H11 V3.5 M7.5 12.5 H11 V10.5 M8 7 H11" stroke="#4a5468" stroke-width="1" fill="none"/><path d="M9.6 5.4 L11.4 7 L9.6 8.6" fill="none" stroke="#4a5468" stroke-width=".9"/>
<rect x="11.5" y="4.5" width="5" height="5" fill="#f08a4a" stroke="#b8572a" stroke-width=".8"/></svg>
<svg style="left:679px;top:101px" width="16" height="17" viewBox="0 0 16 17">
<rect x="0.5" y="0.5" width="12" height="12" fill="#f6f7fa" stroke="#7d8799" stroke-width=".9"/>
<path d="M0.5 4.5H12.5 M0.5 8.5H12.5 M4.5 0.5V12.5 M8.5 0.5V12.5" stroke="#9aa3b4" stroke-width=".8"/>
<rect x="4.5" y="4.5" width="4" height="4" fill="#f0785a"/>
<path d="M7.6 6.4 C7.6 3.4 13.4 3.4 13.4 6.6 C13.4 8.8 10.6 9 10.6 11.8" fill="none" stroke="#2e9a34" stroke-width="2"/><circle cx="10.6" cy="15" r="1.4" fill="#2e9a34"/></svg>
<svg style="left:697.5px;top:107px" width="5" height="3" viewBox="0 0 5 3"><path d="M0 0H5L2.5 3Z" fill="#5a5f68"/></svg>
<div class="t" style="left:584.55px;top:120.50px;font-size:11.6px;line-height:16px;letter-spacing:-0.144px;color:#616a7a;">Работа с данными</div>
<div class="a" style="left:727px;top:55px;width:31px;height:31px;border:1px solid #c4cad3;border-radius:4px;background:linear-gradient(#ffffff,#fbfcfd)"></div>
<svg style="left:737px;top:65px" width="12" height="11" viewBox="0 0 12 11">
<path d="M0.8 3.4 H5.4 V0.8 L11 5.5 L5.4 10.2 V7.6 H0.8 Z" fill="#6fbf4a" stroke="#3f7d2c" stroke-width=".9"/></svg>
<div class="t" style="left:716.11px;top:88.80px;font-size:11.6px;line-height:16px;letter-spacing:-0.305px;color:#1e1e1e;">Структура</div>
<svg style="left:740px;top:108.5px" width="5" height="3" viewBox="0 0 5 3"><path d="M0 0H5L2.5 3Z" fill="#5a5f68"/></svg>
<div class="a" style="left:8px;top:141px;width:872px;height:1px;background:#a9b2c0"></div>
<div class="a" style="left:8px;top:142px;width:872px;height:20px;background:#fff"></div>
<div class="a" style="left:8px;top:162px;width:872px;height:1px;background:#a9b2c0"></div>
<div class="a" style="left:8px;top:163px;width:872px;height:3px;background:linear-gradient(#eef2f8,#dfe6f0)"></div>
<div class="t" style="left:67.63px;top:143.70px;font-size:13px;line-height:17px;letter-spacing:-0.378px;color:#000;">B10</div>
<svg style="left:155.5px;top:151.5px" width="8" height="4" viewBox="0 0 8 4"><path d="M0 0H8L4 4Z" fill="#222"/></svg>
<div class="a" style="left:168px;top:142px;width:86px;height:20px;background:#fff"></div>
<div class="a" style="left:169px;top:142px;width:85px;height:20px;background:linear-gradient(#e3e7ed,#dde1e8);border:1px solid #a3abb8;border-right:1px solid #b5bcc8;border-radius:10px 0 0 10px"></div>
<div class="a" style="left:174.5px;top:147.5px;width:8px;height:8px;border-radius:50%;background:radial-gradient(circle at 40% 35%,#f4f5f7 0%,#c9cdd4 60%,#b2b7c0 100%)"></div>
<div class="t" style="left:235.5px;top:143px;font-family:'Liberation Serif',serif;font-style:italic;font-weight:bold;font-size:14px;line-height:16px;color:#3c3c3c;letter-spacing:-0.6px">f<span style="font-size:9.5px;position:relative;top:1px">x</span></div>
<div class="a" style="left:864px;top:142px;width:16px;height:20px;background:#dfe3ea;border-left:1px solid #c5cbd5"></div>
<svg style="left:867px;top:148px" width="9" height="7" viewBox="0 0 9 7"><path d="M1 1.2 L4.5 5 L8 1.2" fill="none" stroke="#4d535c" stroke-width="1.9"/></svg>
<div class="a" style="left:8px;top:166px;width:856px;height:437px;background:#fff"></div>
<div class="a" style="left:8px;top:166px;width:856px;height:437px;overflow:hidden">
<div class="a" style="left:26px;top:40px;width:830px;height:1px;background:#d4d7dc"></div>
<div class="a" style="left:26px;top:65px;width:830px;height:1px;background:#d4d7dc"></div>
<div class="a" style="left:26px;top:86px;width:830px;height:1px;background:#d4d7dc"></div>
<div class="a" style="left:26px;top:107px;width:830px;height:1px;background:#d4d7dc"></div>
<div class="a" style="left:26px;top:127px;width:830px;height:1px;background:#d4d7dc"></div>
<div class="a" style="left:26px;top:148px;width:830px;height:1px;background:#d4d7dc"></div>
<div class="a" style="left:26px;top:169px;width:830px;height:1px;background:#d4d7dc"></div>
<div class="a" style="left:26px;top:190px;width:830px;height:1px;background:#d4d7dc"></div>
<div class="a" style="left:26px;top:211px;width:830px;height:1px;background:#d4d7dc"></div>
<div class="a" style="left:26px;top:232px;width:830px;height:1px;background:#d4d7dc"></div>
<div class="a" style="left:26px;top:252px;width:830px;height:1px;background:#d4d7dc"></div>
<div class="a" style="left:26px;top:272px;width:830px;height:1px;background:#d4d7dc"></div>
<div class="a" style="left:26px;top:292px;width:830px;height:1px;background:#d4d7dc"></div>
<div class="a" style="left:26px;top:312px;width:830px;height:1px;background:#d4d7dc"></div>
<div class="a" style="left:26px;top:332px;width:830px;height:1px;background:#d4d7dc"></div>
<div class="a" style="left:26px;top:352px;width:830px;height:1px;background:#d4d7dc"></div>
<div class="a" style="left:26px;top:372px;width:830px;height:1px;background:#d4d7dc"></div>
<div class="a" style="left:26px;top:392px;width:830px;height:1px;background:#d4d7dc"></div>
<div class="a" style="left:26px;top:412px;width:830px;height:1px;background:#d4d7dc"></div>
<div class="a" style="left:26px;top:432px;width:830px;height:1px;background:#d4d7dc"></div>
<div class="a" style="left:26px;top:452px;width:830px;height:1px;background:#d4d7dc"></div>
<div class="a" style="left:186px;top:21px;width:1px;height:416px;background:#d4d7dc"></div>
<div class="a" style="left:347px;top:21px;width:1px;height:416px;background:#d4d7dc"></div>
<div class="a" style="left:539px;top:21px;width:1px;height:416px;background:#d4d7dc"></div>
<div class="a" style="left:700px;top:21px;width:1px;height:416px;background:#d4d7dc"></div>
<div class="a" style="left:26px;top:41px;width:830px;height:24px;background:#fff"></div>
<div class="a" style="left:26px;top:66px;width:830px;height:20px;background:#fff"></div>
<div class="a" style="left:26px;top:108px;width:830px;height:19px;background:#60497a"></div>
<div class="a" style="left:186px;top:107px;width:670px;height:1px;background:#000"></div>
<div class="a" style="left:26px;top:107px;width:160px;height:1px;background:#60497a"></div>
<div class="a" style="left:26px;top:127px;width:830px;height:1px;background:#000"></div>
<div class="a" style="left:186px;top:107px;width:1px;height:21px;background:#000"></div>
<div class="a" style="left:347px;top:107px;width:1px;height:21px;background:#000"></div>
<div class="a" style="left:539px;top:107px;width:1px;height:21px;background:#000"></div>
<div class="a" style="left:700px;top:107px;width:1px;height:21px;background:#000"></div>
<div class="a" style="left:26px;top:253px;width:830px;height:19px;background:#60497a"></div>
<div class="a" style="left:186px;top:252px;width:670px;height:1px;background:#000"></div>
<div class="a" style="left:26px;top:252px;width:160px;height:1px;background:#60497a"></div>
<div class="a" style="left:26px;top:272px;width:830px;height:1px;background:#000"></div>
<div class="a" style="left:186px;top:252px;width:1px;height:21px;background:#000"></div>
<div class="a" style="left:347px;top:252px;width:1px;height:21px;background:#000"></div>
<div class="a" style="left:539px;top:252px;width:1px;height:21px;background:#000"></div>
<div class="a" style="left:700px;top:252px;width:1px;height:21px;background:#000"></div>
<div class="a" style="left:26px;top:128px;width:830px;height:83px;background:#ffc000"></div>
<div class="a" style="left:26px;top:211px;width:830px;height:1px;background:#ffc000"></div>
<div class="a" style="left:26px;top:273px;width:160px;height:19px;background:#92d050"></div>
<div class="a" style="left:26px;top:292px;width:830px;height:1px;background:#000"></div>
<div class="a" style="left:26px;top:293px;width:160px;height:19px;background:#92d050"></div>
<div class="a" style="left:26px;top:312px;width:830px;height:1px;background:#000"></div>
<div class="a" style="left:26px;top:313px;width:160px;height:19px;background:#92d050"></div>
<div class="a" style="left:26px;top:332px;width:830px;height:1px;background:#000"></div>
<div class="a" style="left:26px;top:333px;width:160px;height:19px;background:#92d050"></div>
<div class="a" style="left:26px;top:352px;width:830px;height:1px;background:#000"></div>
<div class="a" style="left:26px;top:353px;width:160px;height:19px;background:#92d050"></div>
<div class="a" style="left:26px;top:372px;width:830px;height:1px;background:#000"></div>
<div class="a" style="left:26px;top:373px;width:160px;height:19px;background:#92d050"></div>
<div class="a" style="left:26px;top:392px;width:830px;height:1px;background:#000"></div>
<div class="a" style="left:26px;top:393px;width:160px;height:19px;background:#92d050"></div>
<div class="a" style="left:26px;top:412px;width:830px;height:1px;background:#000"></div>
<div class="a" style="left:26px;top:413px;width:160px;height:19px;background:#92d050"></div>
<div class="a" style="left:26px;top:432px;width:830px;height:1px;background:#000"></div>
<div class="a" style="left:26px;top:433px;width:160px;height:19px;background:#92d050"></div>
<div class="a" style="left:26px;top:452px;width:830px;height:1px;background:#000"></div>
<div class="a" style="left:186px;top:272px;width:1px;height:165px;background:#000"></div>
<div class="a" style="left:347px;top:272px;width:1px;height:165px;background:#000"></div>
<div class="a" style="left:539px;top:272px;width:1px;height:165px;background:#000"></div>
<div class="a" style="left:700px;top:272px;width:1px;height:165px;background:#000"></div>
</div>
<div class="a" style="left:8px;top:166px;width:872px;height:1px;background:#9ea8b7"></div>
<div class="a" style="left:8px;top:167px;width:856px;height:19px;background:linear-gradient(180deg,#e5e8ed 0%,#dfe3e9 50%,#d7dbe3 100%)"></div>
<div class="a" style="left:8px;top:186px;width:856px;height:1px;background:#9ea8b7"></div>
<div class="a" style="left:33px;top:167px;width:1px;height:19px;background:#a8b1bf"></div>
<div class="a" style="left:194px;top:167px;width:1px;height:19px;background:#a8b1bf"></div>
<div class="a" style="left:355px;top:167px;width:1px;height:19px;background:#a8b1bf"></div>
<div class="a" style="left:547px;top:167px;width:1px;height:19px;background:#a8b1bf"></div>
<div class="a" style="left:708px;top:167px;width:1px;height:19px;background:#a8b1bf"></div>
<svg style="left:18px;top:172px" width="12" height="12" viewBox="0 0 12 12"><path d="M11 0.5 V11 H0.5 Z" fill="#b8bec8"/></svg>
<div class="a" style="left:195px;top:167px;width:160px;height:19px;background:linear-gradient(180deg,#f8d47a 0%,#fad466 42%,#ffe27a 50%,#ffe584 100%)"></div>
<div class="a" style="left:194px;top:166px;width:162px;height:1px;background:#a9a08a"></div>
<div class="a" style="left:194px;top:186px;width:162px;height:1px;background:#d9a33c"></div>
<div class="a" style="left:194px;top:167px;width:1px;height:19px;background:#d9a33c"></div>
<div class="a" style="left:355px;top:167px;width:1px;height:19px;background:#d9a33c"></div>
<div class="t" style="left:109.36px;top:168.60px;font-size:13px;line-height:17px;letter-spacing:0.000px;color:#2d2d2d;">A</div>
<div class="t" style="left:270.17px;top:168.60px;font-size:13px;line-height:17px;letter-spacing:0.000px;color:#2d2d2d;">B</div>
<div class="t" style="left:446.42px;top:168.60px;font-size:13px;line-height:17px;letter-spacing:0.000px;color:#2d2d2d;">C</div>
<div class="t" style="left:622.78px;top:168.60px;font-size:13px;line-height:17px;letter-spacing:0.000px;color:#2d2d2d;">D</div>
<div class="t" style="left:812.91px;top:168.60px;font-size:13px;line-height:17px;letter-spacing:0.000px;color:#2d2d2d;">E</div>
<div class="a" style="left:8px;top:187px;width:25px;height:416px;background:#e2e5ea"></div>
<div class="a" style="left:33px;top:187px;width:1px;height:416px;background:#a0a9b8"></div>
<div class="a" style="left:8px;top:206px;width:25px;height:1px;background:#bfc6d1"></div>
<div class="a" style="left:8px;top:231px;width:25px;height:1px;background:#bfc6d1"></div>
<div class="a" style="left:8px;top:252px;width:25px;height:1px;background:#bfc6d1"></div>
<div class="a" style="left:8px;top:273px;width:25px;height:1px;background:#bfc6d1"></div>
<div class="a" style="left:8px;top:293px;width:25px;height:1px;background:#bfc6d1"></div>
<div class="a" style="left:8px;top:314px;width:25px;height:1px;background:#bfc6d1"></div>
<div class="a" style="left:8px;top:335px;width:25px;height:1px;background:#bfc6d1"></div>
<div class="a" style="left:8px;top:356px;width:25px;height:1px;background:#bfc6d1"></div>
<div class="a" style="left:8px;top:377px;width:25px;height:1px;background:#bfc6d1"></div>
<div class="a" style="left:8px;top:398px;width:25px;height:1px;background:#bfc6d1"></div>
<div class="a" style="left:8px;top:418px;width:25px;height:1px;background:#bfc6d1"></div>
<div class="a" style="left:8px;top:438px;width:25px;height:1px;background:#bfc6d1"></div>
<div class="a" style="left:8px;top:458px;width:25px;height:1px;background:#bfc6d1"></div>
<div class="a" style="left:8px;top:478px;width:25px;height:1px;background:#bfc6d1"></div>
<div class="a" style="left:8px;top:498px;width:25px;height:1px;background:#bfc6d1"></div>
<div class="a" style="left:8px;top:518px;width:25px;height:1px;background:#bfc6d1"></div>
<div class="a" style="left:8px;top:538px;width:25px;height:1px;background:#bfc6d1"></div>
<div class="a" style="left:8px;top:558px;width:25px;height:1px;background:#bfc6d1"></div>
<div class="a" style="left:8px;top:578px;width:25px;height:1px;background:#bfc6d1"></div>
<div class="a" style="left:8px;top:598px;width:25px;height:1px;background:#bfc6d1"></div>
<div class="a" style="left:8px;top:378px;width:25px;height:20px;background:linear-gradient(90deg,#ffd978,#ffd35f)"></div>
<div class="a" style="left:8px;top:377px;width:26px;height:1px;background:#dba43c"></div>
<div class="a" style="left:8px;top:398px;width:26px;height:1px;background:#dba43c"></div>
<div class="a" style="left:33px;top:377px;width:1px;height:22px;background:#dba43c"></div>
<div class="t" style="left:16.11px;top:188.60px;font-size:13px;line-height:17px;letter-spacing:0.000px;color:#2d2d2d;">1</div>
<div class="t" style="left:16.45px;top:213.60px;font-size:13px;line-height:17px;letter-spacing:0.000px;color:#2d2d2d;">2</div>
<div class="t" style="left:16.60px;top:234.60px;font-size:13px;line-height:17px;letter-spacing:0.000px;color:#2d2d2d;">3</div>
<div class="t" style="left:16.80px;top:255.60px;font-size:13px;line-height:17px;letter-spacing:0.000px;color:#2d2d2d;">4</div>
<div class="t" style="left:16.58px;top:275.60px;font-size:13px;line-height:17px;letter-spacing:0.000px;color:#2d2d2d;">5</div>
<div class="t" style="left:16.44px;top:296.60px;font-size:13px;line-height:17px;letter-spacing:0.000px;color:#2d2d2d;">6</div>
<div class="t" style="left:16.43px;top:317.60px;font-size:13px;line-height:17px;letter-spacing:0.000px;color:#2d2d2d;">7</div>
<div class="t" style="left:16.54px;top:338.60px;font-size:13px;line-height:17px;letter-spacing:0.000px;color:#2d2d2d;">8</div>
<div class="t" style="left:16.49px;top:359.60px;font-size:13px;line-height:17px;letter-spacing:0.000px;color:#2d2d2d;">9</div>
<div class="t" style="left:13.71px;top:380.60px;font-size:13px;line-height:17px;letter-spacing:0.438px;color:#2d2d2d;">10</div>
<div class="t" style="left:13.71px;top:400.60px;font-size:13px;line-height:17px;letter-spacing:0.565px;color:#2d2d2d;">11</div>
<div class="t" style="left:13.71px;top:420.60px;font-size:13px;line-height:17px;letter-spacing:0.584px;color:#2d2d2d;">12</div>
<div class="t" style="left:13.71px;top:440.60px;font-size:13px;line-height:17px;letter-spacing:0.502px;color:#2d2d2d;">13</div>
<div class="t" style="left:13.71px;top:460.60px;font-size:13px;line-height:17px;letter-spacing:0.311px;color:#2d2d2d;">14</div>
<div class="t" style="left:13.71px;top:480.60px;font-size:13px;line-height:17px;letter-spacing:0.476px;color:#2d2d2d;">15</div>
<div class="t" style="left:13.71px;top:500.60px;font-size:13px;line-height:17px;letter-spacing:0.502px;color:#2d2d2d;">16</div>
<div class="t" style="left:13.71px;top:520.60px;font-size:13px;line-height:17px;letter-spacing:0.584px;color:#2d2d2d;">17</div>
<div class="t" style="left:13.71px;top:540.60px;font-size:13px;line-height:17px;letter-spacing:0.495px;color:#2d2d2d;">18</div>
<div class="t" style="left:13.71px;top:560.60px;font-size:13px;line-height:17px;letter-spacing:0.546px;color:#2d2d2d;">19</div>
<div class="t" style="left:14.05px;top:580.60px;font-size:13px;line-height:17px;letter-spacing:0.102px;color:#2d2d2d;">20</div>
<div class="t" style="left:324.32px;top:210.30px;font-size:15.8px;line-height:20px;letter-spacing:0.055px;color:#000;font-weight:bold;">Таблица</div>
<div class="t" style="left:397.09px;top:210.30px;font-size:15.8px;line-height:20px;letter-spacing:0.174px;color:#000;font-weight:bold;">заработной</div>
<div class="t" style="left:493.90px;top:210.30px;font-size:15.8px;line-height:20px;letter-spacing:0.527px;color:#000;font-weight:bold;">платы</div>
<div class="t" style="left:548.40px;top:210.30px;font-size:15.8px;line-height:20px;letter-spacing:0.304px;color:#000;font-weight:bold;">персонала</div>
<div class="t" style="left:439.64px;top:234.50px;font-size:13.8px;line-height:18px;letter-spacing:0.347px;color:#000;font-weight:bold;">за 2016 год</div>
<div class="t" style="left:99.62px;top:275.90px;font-size:13.2px;line-height:17px;letter-spacing:1.172px;color:#fff;font-weight:bold;">Имя</div>
<div class="t" style="left:262.32px;top:275.90px;font-size:13.2px;line-height:17px;letter-spacing:0.084px;color:#fff;font-weight:bold;">Пол</div>
<div class="t" style="left:383.62px;top:275.90px;font-size:13.2px;line-height:17px;letter-spacing:-0.213px;color:#fff;font-weight:bold;">Категория персонала</div>
<div class="t" style="left:612.88px;top:275.90px;font-size:13.2px;line-height:17px;letter-spacing:-0.340px;color:#fff;font-weight:bold;">Дата</div>
<div class="t" style="left:718.06px;top:275.90px;font-size:13.2px;line-height:17px;letter-spacing:-0.122px;color:#fff;font-weight:bold;">Сумма</div>
<div class="t" style="left:765.36px;top:275.90px;font-size:13.2px;line-height:17px;letter-spacing:-0.450px;color:#fff;font-weight:bold;transform:scaleX(0.9868);transform-origin:0 0;">заработной</div>
<div class="t" style="left:839.38px;top:275.90px;font-size:13.2px;line-height:17px;letter-spacing:0.527px;color:#fff;font-weight:bold;width:24.62px;overflow:hidden;">платы</div>
<div class="t" style="left:99.62px;top:420.90px;font-size:13.2px;line-height:17px;letter-spacing:1.172px;color:#fff;font-weight:bold;">Имя</div>
<div class="t" style="left:262.32px;top:420.90px;font-size:13.2px;line-height:17px;letter-spacing:0.084px;color:#fff;font-weight:bold;">Пол</div>
<div class="t" style="left:383.62px;top:420.90px;font-size:13.2px;line-height:17px;letter-spacing:-0.213px;color:#fff;font-weight:bold;">Категория персонала</div>
<div class="t" style="left:612.88px;top:420.90px;font-size:13.2px;line-height:17px;letter-spacing:-0.340px;color:#fff;font-weight:bold;">Дата</div>
<div class="t" style="left:718.06px;top:420.90px;font-size:13.2px;line-height:17px;letter-spacing:-0.122px;color:#fff;font-weight:bold;">Сумма</div>
<div class="t" style="left:765.36px;top:420.90px;font-size:13.2px;line-height:17px;letter-spacing:-0.450px;color:#fff;font-weight:bold;transform:scaleX(0.9868);transform-origin:0 0;">заработной</div>
<div class="t" style="left:839.38px;top:420.90px;font-size:13.2px;line-height:17px;letter-spacing:0.527px;color:#fff;font-weight:bold;width:24.62px;overflow:hidden;">платы</div>
<div class="t" style="left:259.00px;top:295.80px;font-size:14.4px;line-height:18px;letter-spacing:0.927px;color:#000;">муж.</div>
<div class="t" style="left:383.52px;top:295.60px;font-size:14.4px;line-height:18px;letter-spacing:0.224px;color:#000;">Основной персонал</div>
<div class="t" style="left:592.28px;top:296.00px;font-size:14.4px;line-height:18px;letter-spacing:-0.001px;color:#000;">25.07.2016</div>
<div class="t" style="left:35.62px;top:440.90px;font-size:13.2px;line-height:17px;letter-spacing:0.289px;color:#000;">Николаев А. Д.</div>
<div class="t" style="left:259.58px;top:440.90px;font-size:13.2px;line-height:17px;letter-spacing:1.316px;color:#000;">муж.</div>
<div class="t" style="left:387.57px;top:440.90px;font-size:13.2px;line-height:17px;letter-spacing:0.347px;color:#000;">Основной персонал</div>
<div class="t" style="left:595.54px;top:440.90px;font-size:13.2px;line-height:17px;letter-spacing:-0.113px;color:#000;">25.05.2016</div>
<div class="t" style="left:799.89px;top:440.90px;font-size:13.2px;line-height:17px;letter-spacing:-0.191px;color:#000;">21556</div>
<div class="t" style="left:36.03px;top:460.90px;font-size:13.2px;line-height:17px;letter-spacing:-0.143px;color:#000;">Сафронова В. М.</div>
<div class="t" style="left:260.45px;top:460.90px;font-size:13.2px;line-height:17px;letter-spacing:1.041px;color:#000;">жен.</div>
<div class="t" style="left:387.57px;top:460.90px;font-size:13.2px;line-height:17px;letter-spacing:0.347px;color:#000;">Основной персонал</div>
<div class="t" style="left:595.54px;top:460.90px;font-size:13.2px;line-height:17px;letter-spacing:-0.113px;color:#000;">25.05.2016</div>
<div class="t" style="left:799.54px;top:460.90px;font-size:13.2px;line-height:17px;letter-spacing:-0.105px;color:#000;">18546</div>
<div class="t" style="left:35.62px;top:480.90px;font-size:13.2px;line-height:17px;letter-spacing:0.046px;color:#000;">Коваль Л. П.</div>
<div class="t" style="left:260.45px;top:480.90px;font-size:13.2px;line-height:17px;letter-spacing:1.041px;color:#000;">жен.</div>
<div class="t" style="left:360.92px;top:480.90px;font-size:13.2px;line-height:17px;letter-spacing:0.354px;color:#000;">Вспомогательный персонал</div>
<div class="t" style="left:595.54px;top:480.90px;font-size:13.2px;line-height:17px;letter-spacing:-0.113px;color:#000;">25.05.2016</div>
<div class="t" style="left:799.54px;top:480.90px;font-size:13.2px;line-height:17px;letter-spacing:-0.105px;color:#000;">10546</div>
<div class="t" style="left:35.63px;top:500.90px;font-size:13.2px;line-height:17px;letter-spacing:0.032px;color:#000;">Парфенов Д. Ф.</div>
<div class="t" style="left:259.58px;top:500.90px;font-size:13.2px;line-height:17px;letter-spacing:1.316px;color:#000;">муж.</div>
<div class="t" style="left:387.57px;top:500.90px;font-size:13.2px;line-height:17px;letter-spacing:0.347px;color:#000;">Основной персонал</div>
<div class="t" style="left:595.54px;top:500.90px;font-size:13.2px;line-height:17px;letter-spacing:-0.113px;color:#000;">25.05.2016</div>
<div class="t" style="left:800.05px;top:500.90px;font-size:13.2px;line-height:17px;letter-spacing:-0.279px;color:#000;">35254</div>
<div class="t" style="left:35.63px;top:520.90px;font-size:13.2px;line-height:17px;letter-spacing:0.000px;color:#000;">Петров Ф. Л.</div>
<div class="t" style="left:259.58px;top:520.90px;font-size:13.2px;line-height:17px;letter-spacing:1.316px;color:#000;">муж.</div>
<div class="t" style="left:387.57px;top:520.90px;font-size:13.2px;line-height:17px;letter-spacing:0.347px;color:#000;">Основной персонал</div>
<div class="t" style="left:595.54px;top:520.90px;font-size:13.2px;line-height:17px;letter-spacing:-0.113px;color:#000;">25.05.2016</div>
<div class="t" style="left:799.54px;top:520.90px;font-size:13.2px;line-height:17px;letter-spacing:-0.105px;color:#000;">11456</div>
<div class="t" style="left:35.63px;top:540.90px;font-size:13.2px;line-height:17px;letter-spacing:0.000px;color:#000;">Попова М. Д.</div>
<div class="t" style="left:260.45px;top:540.90px;font-size:13.2px;line-height:17px;letter-spacing:1.041px;color:#000;">жен.</div>
<div class="t" style="left:360.92px;top:540.90px;font-size:13.2px;line-height:17px;letter-spacing:0.354px;color:#000;">Вспомогательный персонал</div>
<div class="t" style="left:595.54px;top:540.90px;font-size:13.2px;line-height:17px;letter-spacing:-0.113px;color:#000;">25.05.2016</div>
<div class="t" style="left:803.48px;top:540.90px;font-size:13.2px;line-height:17px;letter-spacing:-0.253px;color:#000;">9564</div>
<div class="t" style="left:35.62px;top:560.90px;font-size:13.2px;line-height:17px;letter-spacing:0.289px;color:#000;">Николаев А. Д.</div>
<div class="t" style="left:259.58px;top:560.90px;font-size:13.2px;line-height:17px;letter-spacing:1.316px;color:#000;">муж.</div>
<div class="t" style="left:387.57px;top:560.90px;font-size:13.2px;line-height:17px;letter-spacing:0.347px;color:#000;">Основной персонал</div>
<div class="t" style="left:595.54px;top:560.90px;font-size:13.2px;line-height:17px;letter-spacing:-0.113px;color:#000;">23.06.2016</div>
<div class="t" style="left:799.89px;top:560.90px;font-size:13.2px;line-height:17px;letter-spacing:-0.239px;color:#000;">23754</div>
<div class="t" style="left:36.03px;top:580.90px;font-size:13.2px;line-height:17px;letter-spacing:-0.143px;color:#000;">Сафронова В. М.</div>
<div class="t" style="left:260.45px;top:580.90px;font-size:13.2px;line-height:17px;letter-spacing:1.041px;color:#000;">жен.</div>
<div class="t" style="left:387.57px;top:580.90px;font-size:13.2px;line-height:17px;letter-spacing:0.347px;color:#000;">Основной персонал</div>
<div class="t" style="left:595.54px;top:580.90px;font-size:13.2px;line-height:17px;letter-spacing:-0.113px;color:#000;">23.06.2016</div>
<div class="t" style="left:799.54px;top:580.90px;font-size:13.2px;line-height:17px;letter-spacing:-0.105px;color:#000;">18546</div>
<div class="a" style="left:193px;top:376px;width:164px;height:2px;background:#0040ff"></div>
<div class="a" style="left:193px;top:378px;width:164px;height:1px;background:#000"></div>
<div class="a" style="left:193px;top:376px;width:3px;height:24px;background:#000"></div>
<div class="a" style="left:193px;top:376px;width:3px;height:2px;background:#0040ff"></div>
<div class="a" style="left:354px;top:376px;width:3px;height:20px;background:#000"></div>
<div class="a" style="left:354px;top:376px;width:3px;height:2px;background:#0040ff"></div>
<div class="a" style="left:193px;top:397px;width:159px;height:3px;background:#000"></div>
<div class="a" style="left:352px;top:395px;width:7px;height:7px;background:#fff"></div>
<div class="a" style="left:353px;top:396px;width:5px;height:5px;background:#000"></div>
<div class="a" style="left:864px;top:166px;width:16px;height:437px;background:linear-gradient(90deg,#dfe3ea 0%,#e3e7ed 60%,#eceff4 100%)"></div>
<div class="a" style="left:865px;top:167px;width:14px;height:8px;background:#fff;border:1px solid #8a93a3"><div class="a" style="left:3px;top:2px;width:6px;height:1px;background:#6b7482"></div></div>
<svg style="left:867px;top:181px" width="9" height="5" viewBox="0 0 9 5"><path d="M0 5H9L4.5 0Z" fill="#4a4f58"/></svg>
<div class="a" style="left:865px;top:192px;width:14px;height:147px;border:1px solid #8e98a8;border-radius:2px;background:linear-gradient(90deg,#f2f4f8 0%,#e6e9ef 50%,#d6dae2 100%)"></div>
<div class="a" style="left:868px;top:261px;width:8px;height:1px;background:#7d8694"></div>
<div class="a" style="left:868px;top:263px;width:8px;height:1px;background:#7d8694"></div>
<div class="a" style="left:868px;top:265px;width:8px;height:1px;background:#7d8694"></div>
<div class="a" style="left:868px;top:267px;width:8px;height:1px;background:#7d8694"></div>
<svg style="left:867px;top:592px" width="9" height="5" viewBox="0 0 9 5"><path d="M0 0H9L4.5 5Z" fill="#4a4f58"/></svg>
<div class="a" style="left:8px;top:603px;width:856px;height:16px;background:linear-gradient(180deg,#dde3ec,#d2d9e4)"></div>
<div class="a" style="left:8px;top:603px;width:63px;height:16px;background:linear-gradient(180deg,#e3e8f0,#dae0ea)"></div>
<div class="a" style="left:8px;top:619px;width:872px;height:1px;background:#8e98a8"></div>
<svg style="left:13px;top:607px" width="7" height="8" viewBox="0 0 7 8"><rect x="0" y="0" width="1.4" height="8" fill="#4d535d"/><path d="M6.5 0V8L2 4Z" fill="#4d535d"/></svg>
<svg style="left:29.5px;top:607px" width="5" height="8" viewBox="0 0 5 8"><path d="M4.8 0V8L0.3 4Z" fill="#4d535d"/></svg>
<svg style="left:44px;top:607px" width="5" height="8" viewBox="0 0 5 8"><path d="M0.2 0V8L4.7 4Z" fill="#4d535d"/></svg>
<svg style="left:57.5px;top:607px" width="7" height="8" viewBox="0 0 7 8"><rect x="5.6" y="0" width="1.4" height="8" fill="#4d535d"/><path d="M0.5 0V8L5 4Z" fill="#4d535d"/></svg>
<div class="a" style="left:70px;top:604px;width:1px;height:15px;background:#9aa3b3"></div>
<div class="a" style="left:71px;top:604px;width:1px;height:15px;background:#f4f6f9"></div>
<svg style="left:0;top:603px" width="888" height="17" viewBox="0 603 888 17"><defs><linearGradient id="tg" x1="0" y1="0" x2="0" y2="1"><stop offset="0" stop-color="#e6eaf1"/><stop offset="1" stop-color="#d8dee8"/></linearGradient></defs><path d="M76.7 619 L90 603.5 H510 L497.5 619 Z" fill="url(#tg)"/><path d="M309.5 619 V603 H372 L358.4 619 Z" fill="#fff"/><path d="M90 603.5 H309.5 M372 603.5 H510" stroke="#9aa3b3" stroke-width="1" fill="none"/><path d="M77.7 618.5 L90 604" stroke="#8e98a8" stroke-width="1" fill="none"/><path d="M74.2 619 L77.5 615.8 L78.2 619 Z" fill="#f4f6f9" stroke="#9aa3b3" stroke-width=".5"/><path d="M131.8 618.5 L143.3 604" stroke="#8e98a8" stroke-width="1" fill="none"/><path d="M128.3 619 L131.6 615.8 L132.3 619 Z" fill="#f4f6f9" stroke="#9aa3b3" stroke-width=".5"/><path d="M184.3 618.5 L195.8 604" stroke="#8e98a8" stroke-width="1" fill="none"/><path d="M180.8 619 L184.1 615.8 L184.8 619 Z" fill="#f4f6f9" stroke="#9aa3b3" stroke-width=".5"/><path d="M246 618.5 L257.5 604" stroke="#8e98a8" stroke-width="1" fill="none"/><path d="M242.5 619 L245.8 615.8 L246.5 619 Z" fill="#f4f6f9" stroke="#9aa3b3" stroke-width=".5"/><path d="M309.5 603.5 V617" stroke="#8e98a8" stroke-width="1" fill="none"/><path d="M305.5 619 L309.5 615.5 V619 Z" fill="#f4f6f9" stroke="#9aa3b3" stroke-width=".5"/><path d="M359.4 618.5 L372 604" stroke="#8e98a8" stroke-width="1" fill="none"/><path d="M355.9 619 L359.2 615.8 L359.9 619 Z" fill="#f4f6f9" stroke="#9aa3b3" stroke-width=".5"/><path d="M412.7 618.5 L424 604" stroke="#8e98a8" stroke-width="1" fill="none"/><path d="M409.2 619 L412.5 615.8 L413.2 619 Z" fill="#f4f6f9" stroke="#9aa3b3" stroke-width=".5"/><path d="M466 618.5 L477.5 604" stroke="#8e98a8" stroke-width="1" fill="none"/><path d="M462.5 619 L465.8 615.8 L466.5 619 Z" fill="#f4f6f9" stroke="#9aa3b3" stroke-width=".5"/><path d="M498.5 618.5 L510 604" stroke="#8e98a8" stroke-width="1" fill="none"/><path d="M495 619 L498.3 615.8 L499 619 Z" fill="#f4f6f9" stroke="#9aa3b3" stroke-width=".5"/></svg>
<div class="t" style="left:91.19px;top:603.10px;font-size:12.6px;line-height:17px;letter-spacing:-0.132px;color:#36415a;">Лист8</div>
<div class="t" style="left:144.09px;top:603.10px;font-size:12.6px;line-height:17px;letter-spacing:0.031px;color:#36415a;">Лист9</div>
<div class="t" style="left:198.19px;top:603.10px;font-size:12.6px;line-height:17px;letter-spacing:-0.178px;color:#36415a;">Лист10</div>
<div class="t" style="left:258.89px;top:603.10px;font-size:12.6px;line-height:17px;letter-spacing:-0.293px;color:#36415a;">Лист11</div>
<div class="t" style="left:318.45px;top:603.10px;font-size:12.6px;line-height:17px;letter-spacing:-0.218px;color:#2b3040;font-weight:bold;">Лист1</div>
<div class="t" style="left:372.09px;top:603.10px;font-size:12.6px;line-height:17px;letter-spacing:-0.085px;color:#36415a;">Лист2</div>
<div class="t" style="left:425.19px;top:603.10px;font-size:12.6px;line-height:17px;letter-spacing:-0.180px;color:#36415a;">Лист3</div>
<svg style="left:479px;top:604px" width="15" height="14" viewBox="0 0 15 14">
<path d="M4.5 3.5 H13.5 V10 C13.5 11.5 12 12.5 10.5 12.5 H4.5 Z" fill="#f6f8fb" stroke="#5a6884" stroke-width="1"/>
<path d="M5 11.5 H10" stroke="#3c4a8c" stroke-width="1.3"/>
<path d="M3.5 0 L4.3 2.3 L6.8 1.3 L5.4 3.5 L7.5 4.8 L5 5 L5 7.4 L3.5 5.4 L1.8 7.2 L2 4.8 L0 4.2 L2 3.2 L0.8 1 L2.9 2.2 Z" fill="#f6b73c" stroke="#d98a1e" stroke-width=".4"/></svg>
<div class="a" style="left:511px;top:603px;width:353px;height:16px;background:linear-gradient(180deg,#e1e6ee,#d5dbe5)"></div>
<div class="a" style="left:523px;top:604px;width:7px;height:15px;background:#fff;border:1px solid #8a93a3"><div class="a" style="left:2px;top:3px;width:1px;height:7px;background:#555c68"></div></div>
<svg style="left:534.5px;top:607px" width="5" height="9" viewBox="0 0 5 9"><path d="M5 0V9L0 4.5Z" fill="#4a4f58"/></svg>
<div class="a" style="left:547px;top:603px;width:219px;height:16px;border:1px solid #8e98a8;border-radius:2px;background:linear-gradient(180deg,#f3f5f8 0%,#e7eaf0 50%,#d9dde5 100%)"></div>
<div class="a" style="left:653px;top:607px;width:1px;height:8px;background:#7d8694"></div>
<div class="a" style="left:655px;top:607px;width:1px;height:8px;background:#7d8694"></div>
<div class="a" style="left:657px;top:607px;width:1px;height:8px;background:#7d8694"></div>
<div class="a" style="left:659px;top:607px;width:1px;height:8px;background:#7d8694"></div>
<svg style="left:846px;top:607px" width="5" height="9" viewBox="0 0 5 9"><path d="M0 0V9L5 4.5Z" fill="#4a4f58"/></svg>
<div class="a" style="left:856px;top:604px;width:8px;height:15px;background:#fff;border:1px solid #8a93a3"><div class="a" style="left:2.5px;top:3px;width:1px;height:7px;background:#555c68"></div></div>
<div class="a" style="left:864px;top:603px;width:16px;height:16px;background:#dfe3ea"></div>
<div class="a" style="left:8px;top:620px;width:872px;height:21px;background:linear-gradient(180deg,#f4f6f9 0px,#e1e5eb 2px,#d6dae2 10px,#c9ced7 12px,#c3c9d2 21px)"></div>
<div class="a" style="left:7px;top:641px;width:874px;height:1px;background:#6f7a8a"></div>
<div class="a" style="left:7px;top:52px;width:1px;height:590px;background:#7b8696"></div>
<div class="a" style="left:880px;top:52px;width:1px;height:590px;background:#7b8696"></div>
<div class="t" style="left:15.32px;top:622.00px;font-size:12px;line-height:16px;letter-spacing:-0.140px;color:#3a3f4a;">Готово</div>
<div class="a" style="left:62px;top:622px;width:1px;height:18px;background:#a7afbc"></div>
<div class="a" style="left:63px;top:622px;width:1px;height:18px;background:rgba(255,255,255,.75)"></div>
<div class="a" style="left:97px;top:622px;width:1px;height:18px;background:#a7afbc"></div>
<div class="a" style="left:98px;top:622px;width:1px;height:18px;background:rgba(255,255,255,.75)"></div>
<div class="a" style="left:623px;top:622px;width:1px;height:18px;background:#a7afbc"></div>
<div class="a" style="left:624px;top:622px;width:1px;height:18px;background:rgba(255,255,255,.75)"></div>
<svg style="left:72px;top:623px" width="15" height="13" viewBox="0 0 15 13">
<rect x="1" y="1.5" width="13.5" height="11" fill="#fff" stroke="#5f6f94" stroke-width="1"/>
<rect x="1.5" y="2" width="12.5" height="2.6" fill="#5a82d4"/>
<path d="M1.5 7H14 M1.5 9.7H14 M5.5 4.6V12 M10 4.6V12" stroke="#8c9ab8" stroke-width=".8"/>
<circle cx="2.6" cy="2.6" r="2.4" fill="#e8733a" stroke="#b8501e" stroke-width=".5"/></svg>
<div class="a" style="left:628px;top:621px;width:19px;height:19px;background:linear-gradient(180deg,#ffe08a,#ffd04f);border:1px solid #dfa53a;border-radius:3px"></div>
<svg style="left:631px;top:625px" width="13" height="10" viewBox="0 0 13 10"><rect x="0" y="0" width="13" height="10" fill="#5b606a"/>
<g fill="#fff"><rect x="1" y="1" width="3" height="2"/><rect x="5" y="1" width="3" height="2"/><rect x="9" y="1" width="3" height="2"/><rect x="1" y="4" width="3" height="2"/><rect x="5" y="4" width="3" height="2"/><rect x="9" y="4" width="3" height="2"/><rect x="1" y="7" width="3" height="2"/><rect x="5" y="7" width="3" height="2"/><rect x="9" y="7" width="3" height="2"/></g></svg>
<svg style="left:649px;top:624px" width="14" height="12" viewBox="0 0 14 12"><rect x="0.5" y="0.5" width="13" height="11" fill="#b4b9c2" stroke="#6b717b"/>
<rect x="3.5" y="2.5" width="7" height="7.5" fill="#fff" stroke="#6b717b" stroke-width=".8"/><path d="M5 4.5H9 M5 6.2H9 M5 7.9H9" stroke="#a4a9b2" stroke-width=".7"/></svg>
<svg style="left:668px;top:624px" width="14" height="12" viewBox="0 0 14 12"><rect x="0.5" y="0.5" width="13" height="11" fill="#b4b9c2" stroke="#6b717b"/>
<rect x="1.5" y="1.5" width="3" height="6" fill="#fff"/><rect x="5.5" y="1.5" width="3" height="6" fill="#fff"/><path d="M1 8.5 H9.5 V1" fill="none" stroke="#6b717b" stroke-width=".8"/></svg>
<div class="t" style="left:692.92px;top:621.80px;font-size:12px;line-height:16px;letter-spacing:-0.450px;color:#3a3f4a;transform:scaleX(0.9643);transform-origin:0 0;">100%</div>
<svg style="left:728.8px;top:621.3px" width="17" height="17" viewBox="0 0 17 17"><defs><linearGradient id="cgm" x1="0" y1="0" x2="0" y2="1"><stop offset="0" stop-color="#fdfdfe"/><stop offset="1" stop-color="#d8dce3"/></linearGradient></defs><circle cx="8.5" cy="8.5" r="7.4" fill="url(#cgm)" stroke="#6d7583" stroke-width="1.2"/><rect x="4.5" y="7.6" width="8" height="1.9" fill="#3f454f"/></svg>
<svg style="left:844.5px;top:621.3px" width="17" height="17" viewBox="0 0 17 17"><defs><linearGradient id="cgp" x1="0" y1="0" x2="0" y2="1"><stop offset="0" stop-color="#fdfdfe"/><stop offset="1" stop-color="#d8dce3"/></linearGradient></defs><circle cx="8.5" cy="8.5" r="7.4" fill="url(#cgp)" stroke="#6d7583" stroke-width="1.2"/><rect x="4.5" y="7.6" width="8" height="1.9" fill="#3f454f"/><rect x="7.55" y="4.5" width="1.9" height="8" fill="#3f454f"/></svg>
<div class="a" style="left:746px;top:629px;width:99px;height:1px;background:#7d8594"></div>
<div class="a" style="left:746px;top:630px;width:99px;height:1px;background:rgba(255,255,255,.8)"></div>
<svg style="left:790px;top:623px" width="11" height="13" viewBox="0 0 11 13"><path d="M1 0.7 H10 V8 L5.5 12.3 L1 8 Z" fill="#eef0f4" stroke="#5e6673" stroke-width="1"/><path d="M2.2 1.8 H8.8 V4" stroke="#fff" stroke-width="1" fill="none"/></svg>
<svg style="left:869.5px;top:630px" width="11" height="11" viewBox="0 0 11 11"><rect x="9" y="1" width="2" height="2" fill="#fff"/><rect x="8" y="0" width="2" height="2" fill="#8e96a3"/><rect x="5" y="5" width="2" height="2" fill="#fff"/><rect x="4" y="4" width="2" height="2" fill="#8e96a3"/><rect x="9" y="5" width="2" height="2" fill="#fff"/><rect x="8" y="4" width="2" height="2" fill="#8e96a3"/><rect x="1" y="9" width="2" height="2" fill="#fff"/><rect x="0" y="8" width="2" height="2" fill="#8e96a3"/><rect x="5" y="9" width="2" height="2" fill="#fff"/><rect x="4" y="8" width="2" height="2" fill="#8e96a3"/><rect x="9" y="9" width="2" height="2" fill="#fff"/><rect x="8" y="8" width="2" height="2" fill="#8e96a3"/></svg>
<svg style="left:0;top:0;z-index:20" width="888" height="649" viewBox="0 0 888 649">
<path d="M27 298.4 L93 298.2 L97 295.6 L794 295.5 L799 296.9 L864 297.1 Q869.6 297.3 869.6 302 L869.6 312 Q869.6 316.6 863 316.9 L800 318.6 L784 319.5 L110 319.3 L104 318.2 L60 318 L54 317 L28 317 Q23.6 317 23.6 312.5 L23.6 303 Q23.6 298.4 28 298.4 Z" fill="none" stroke="#ed1c24" stroke-width="5" stroke-linejoin="round"/>
</svg>
<div class="a" style="left:0;top:0;width:888px;height:649px;border:1px solid #33373c;border-radius:7px;pointer-events:none"></div>
<div class="a" style="left:1px;top:1px;width:886px;height:647px;border:1px solid rgba(255,255,255,.8);border-radius:6px;pointer-events:none"></div>
</div>
</body></html>
